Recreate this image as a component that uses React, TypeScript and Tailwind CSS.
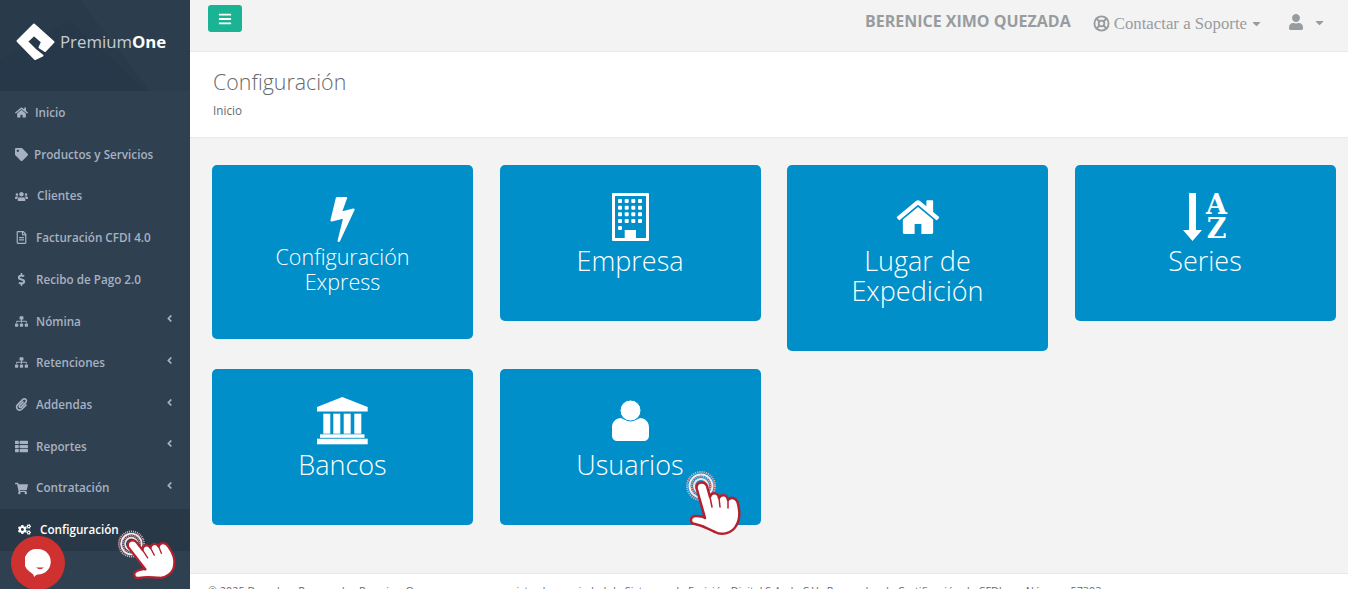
import React from 'react';
import { LifeBuoy } from 'lucide-react';
import { FaHome, FaTag, FaUsers, FaRegFileAlt, FaDollarSign, FaSitemap, FaPaperclip, FaThList, FaShoppingCart, FaCogs, FaAngleLeft, FaBars, FaUser, FaCaretDown } from 'react-icons/fa';

const menu = [
  { label: 'Inicio', icon: FaHome, gap: 'ml-[7px]', arrow: false },
  { label: 'Productos y Servicios', icon: FaTag, gap: 'ml-[6px]', arrow: false },
  { label: 'Clientes', icon: FaUsers, gap: 'ml-[9px]', arrow: false },
  { label: 'Facturación CFDI 4.0', icon: FaRegFileAlt, gap: 'ml-[8px]', arrow: false },
  { label: 'Recibo de Pago 2.0', icon: FaDollarSign, gap: 'ml-[8px]', arrow: false },
  { label: 'Nómina', icon: FaSitemap, gap: 'ml-[8px]', arrow: true },
  { label: 'Retenciones', icon: FaSitemap, gap: 'ml-[8px]', arrow: true },
  { label: 'Addendas', icon: FaPaperclip, gap: 'ml-[8px]', arrow: true },
  { label: 'Reportes', icon: FaThList, gap: 'ml-[8px]', arrow: true },
  { label: 'Contratación', icon: FaShoppingCart, gap: 'ml-[8px]', arrow: true },
];

const Hand = ({ className }: { className: string }) => (
  <svg viewBox="0 0 60 68" className={className}>
    <g fill="none" strokeWidth="2">
      <circle cx="15" cy="16" r="14" stroke="#e2a9b1" strokeDasharray="1.200 1" />
      <circle cx="15" cy="16" r="11.500" stroke="#f8e9ea" />
      <circle cx="15" cy="16" r="9.500" stroke="#e0a3ab" strokeDasharray="1.200 1" />
      <circle cx="15" cy="16" r="7" stroke="#f6e3e5" />
    </g>
    <path
      d="M10.500 18C10.500 10.500 20.500 10.500 21.500 18L24 27C25 22 32 22 33 28C35 24 41 24 42 30C45 26 51 28 52 34C54 42 54 50 50 56C46 63 36 66 29 62C24 60 19 56 9 54C3 53 4 46 10 46C14 46 18 47 19 48Z"
      fill="#fff"
      stroke="#b5202f"
      strokeWidth="2.500"
      strokeLinejoin="round"
    />
    <path d="M24 27L26 37M33 28L34 37M42 30L42 38" fill="none" stroke="#b5202f" strokeWidth="1.500" strokeLinecap="round" />
  </svg>
);

const BoltIcon = () => (
  <svg viewBox="445 128 900 1664" className="mt-[4px] h-[45px] w-[25px]" fill="currentColor">
    <path d="M1333 566q18 20 7 44l-540 1157q-13 25-42 25-4 0-14-2-17-5-25.500-19t-4.500-30l197-808-406 101q-4 1-12 1-18 0-31-11-18-15-13-39l201-825q4-14 16-23t28-9h328q19 0 32 12.500t13 29.500q0 8-5 18l-171 463 396-98q8-2 12-2 19 0 34 15z" />
  </svg>
);

const BuildingIcon = () => {
  const cols = [6, 12.7, 19.3, 26];
  const rows = [6, 12.7, 19.3, 26];
  return (
    <svg viewBox="0 0 37 48" className="h-[48px] w-[37px]" fill="currentColor">
      <path fillRule="evenodd" d="M1 0H36A1 1 0 0 1 37 1V47A1 1 0 0 1 36 48H1A1 1 0 0 1 0 47V1A1 1 0 0 1 1 0ZM3 3V45H12.700V37H24V45H34V3Z" />
      {rows.map(y => cols.map(x => <rect key={`${x}-${y}`} x={x} y={y} width="4" height="4" rx="1" />))}
      <rect x="6" y="33" width="4" height="4" rx="1" />
    </svg>
  );
};

const HomeIcon = () => (
  <svg viewBox="64 128 1664 1408" className="mb-[4px] h-[37px] w-[44px]" fill="currentColor">
    <path d="M1472 992v480q0 26-19 45t-45 19h-384v-384h-256v384h-384q-26 0-45-19t-19-45v-480q0-1 .5-3t.5-3l575-474 575 474q1 2 1 6zm223-69l-62 74q-8 9-21 11h-3q-13 0-21-7l-692-577-692 577q-12 8-24 7-13-2-21-11l-62-74q-8-10-7-23.500t11-21.500l719-599q32-26 76-26t76 26l244 204v-195q0-14 9-23t23-9h192q14 0 23 9t9 23v408l219 182q10 8 11 21.500t-7 23.500z" />
  </svg>
);

const SortIcon = () => (
  <div className="flex h-[48px] items-start">
    <svg viewBox="0 0 19 48" className="h-[48px] w-[19px]" fill="currentColor">
      <path d="M6 0H13V37H19L9.500 48L0 37H6Z" />
    </svg>
    <div className="ml-[4px] flex w-[21px] flex-col items-center font-['DejaVu_Serif',serif] text-[27px] leading-[24px] font-bold">
      <span>A</span>
      <span>Z</span>
    </div>
  </div>
);

const BankIcon = () => (
  <svg viewBox="0 0 51 48" className="h-[48px] w-[51px]" fill="currentColor">
    <path d="M25.300 0L0 10V14.500H50.700V10Z" />
    <rect x="6.300" y="16.700" width="7" height="20" />
    <rect x="16.300" y="16.700" width="7" height="20" />
    <rect x="26.700" y="16.700" width="7" height="20" />
    <rect x="37.300" y="16.700" width="7" height="20" />
    <rect x="3" y="37.300" width="44.500" height="3.500" />
    <rect x="0" y="41.700" width="50.700" height="5.600" />
  </svg>
);

const UserIcon = () => (
  <svg viewBox="0 0 37 41" className="mb-[2px] h-[41px] w-[37px]" fill="currentColor">
    <path d="M0 35V27C0 22 4 18 9 18C13 21 24 21 28 18C33 18 37 22 37 27V35C37 39 35 41 31 41H6C2 41 0 39 0 35Z" />
    <circle cx="18.500" cy="10.500" r="10.500" stroke="#008fc9" strokeWidth="1" />
  </svg>
);

const cards = [
  { title: ['Configuración', 'Express'], icon: <BoltIcon />, small: true },
  { title: ['Empresa'], icon: <BuildingIcon />, small: false },
  { title: ['Lugar de', 'Expedición'], icon: <HomeIcon />, small: false },
  { title: ['Series'], icon: <SortIcon />, small: false },
  { title: ['Bancos'], icon: <BankIcon />, small: false },
  { title: ['Usuarios'], icon: <UserIcon />, small: false },
];

export default function App() {
  return (
    <div className="relative flex h-[589px] w-[1348px] overflow-hidden bg-[#f3f3f4] font-['Open_Sans',sans-serif] text-[#676a6c]">
      <aside className="w-[190px] shrink-0 bg-[#2f4050]">
        <div className="relative h-[91px] overflow-hidden bg-[#293a4a]">
          <svg viewBox="0 0 190 91" className="absolute inset-0 h-full w-full">
            <path d="M80 0L150 91H190V0Z" fill="#2c3e4e" />
            <path d="M0 60L70 20L145 91H0Z" fill="#27384a" />
          </svg>
          <div className="relative flex h-full items-center pb-[7px] pl-[16px]">
            <svg viewBox="0 0 39 38" className="h-[38px] w-[39px]">
              <path d="M18 1.500L37.500 19L29 28L23.500 24.500L26 19L18 12L11 18.500L19 26.500L26.500 32.500L19 36L1.500 18Z" fill="#fff" stroke="#fff" strokeWidth="2" strokeLinejoin="round" />
            </svg>
            <span className="ml-[5px] text-[16.800px] text-[#c5ccd3]">
              Premium<b className="font-bold text-white">One</b>
            </span>
          </div>
        </div>
        <nav className="pt-[1px]">
          {menu.map(item => (
            <a key={item.label} className="flex h-[41.700px] items-center px-[15px] text-[11.700px] font-semibold text-[#a7b1c2]">
              <span className="flex w-[13px] justify-center">
                <item.icon className="shrink-0 text-[13px]" />
              </span>
              <span className={item.gap}>{item.label}</span>
              {item.arrow && <FaAngleLeft className="mb-[5px] ml-auto text-[11px]" />}
            </a>
          ))}
          <a className="flex h-[41.700px] items-center bg-[#293846] pl-[18px] text-[11.700px] font-semibold text-white">
            <FaCogs className="text-[13px]" />
            <span className="ml-[9px]">Configuración</span>
          </a>
        </nav>
      </aside>

      <main className="flex min-w-0 flex-1 flex-col">
        <header className="flex h-[52px] shrink-0 items-start border-b border-[#e7eaec] pl-[18px] pr-[22px]">
          <button className="mt-[5px] flex h-[27px] w-[34px] items-center justify-center rounded-[3px] bg-[#1ab394] text-white">
            <FaBars className="text-[14px]" />
          </button>
          <span className="ml-auto mt-[9px] text-[16px] font-bold text-[#999c9e]">BERENICE XIMO QUEZADA</span>
          <span className="ml-[22px] mt-[14px] flex items-center font-['Liberation_Serif',serif] text-[16.800px] leading-[19px] text-[#999c9e]">
            <LifeBuoy className="mr-[4px] h-[17px] w-[17px]" strokeWidth={2.6} />
            Contactar a Soporte
            <FaCaretDown className="ml-[3px] text-[13px]" />
          </span>
          <span className="ml-[25px] mt-[14px] flex items-center text-[#999c9e]">
            <FaUser className="text-[16px]" />
            <FaCaretDown className="ml-[9px] text-[13px]" />
          </span>
        </header>

        <section className="h-[86px] shrink-0 border-b border-[#e7eaec] bg-white pl-[23px] pt-[15px]">
          <h2 className="text-[21.400px] font-light leading-[29px]">Configuración</h2>
          <p className="mt-[6px] text-[11.700px] leading-[16px]">Inicio</p>
        </section>

        <div className="grid flex-1 grid-cols-[261px_261px_261px_261px] content-start items-start gap-x-[26.500px] gap-y-[18px] pl-[22px] pt-[27px]">
          {cards.map(card => (
            <div key={card.title[0]} className="rounded-[5px] bg-[#008fc9] pb-[45px] pt-[27px] text-center font-light text-white">
              <div className="mb-[4px] flex h-[50px] items-center justify-center">{card.icon}</div>
              <div className={card.small ? '-mt-[1px] text-[21.500px] leading-[24.500px]' : 'text-[27px] leading-[30px]'}>
                {card.title.map(line => (
                  <div key={line}>{line}</div>
                ))}
              </div>
            </div>
          ))}
        </div>

        <footer className="h-[16px] shrink-0 overflow-hidden whitespace-nowrap border-t border-[#e7eaec] bg-white pl-[18px] pt-[9px] text-[10.830px] leading-[16px]">
          © 2025 Derechos Reservados PremiumOne es una marca registrada propiedad de Sistemas de Emisión Digital S.A. de C.V., Proveedor de Certificación de CFDI con Número 57303
        </footer>
      </main>

      <div className="absolute left-[11px] top-[536px] flex h-[54px] w-[54px] items-center justify-center rounded-full bg-[#cf3131]">
        <svg viewBox="0 0 26 28" className="mr-[1px] h-[28px] w-[26px]">
          <path d="M13 0A12.500 12.500 0 0 1 13 25.500C12 25.500 11 26 9 28C9 26 8 25 5 23A12.500 12.500 0 0 1 13 0Z" fill="#fff" />
          <path d="M11 18.500Q15 22 19 18.500Z" fill="#cf3131" />
        </svg>
      </div>
      <Hand className="absolute left-[686px] top-[470px] h-[68px] w-[60px]" />
      <Hand className="absolute left-[120px] top-[520px] h-[68px] w-[60px] -rotate-[22deg] scale-90" />
    </div>
  );
}
